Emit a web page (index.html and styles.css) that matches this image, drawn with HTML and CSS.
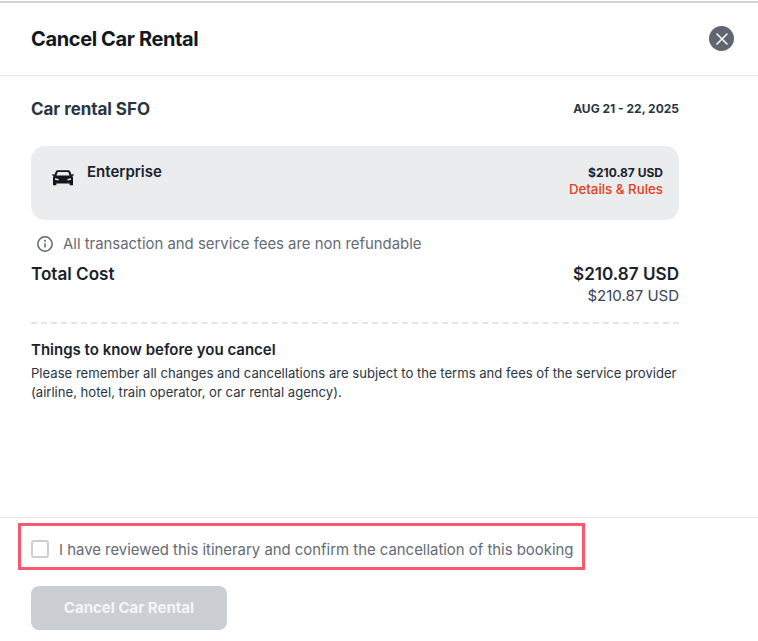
FILE: index.html
```html
<!DOCTYPE html>
<html lang="en">
<head>
<meta charset="utf-8">
<title>Cancel Car Rental</title>
<link rel="stylesheet" href="styles.css">
</head>
<body>
<div class="modal">
  <header class="head">
    <h1 class="title">Cancel Car Rental</h1>
    <button class="close" aria-label="Close">
      <svg width="12" height="12" viewBox="0 0 12 12"><path d="M1 1l10 10M11 1L1 11" stroke="#fff" stroke-width="1.500" stroke-linecap="round"/></svg>
    </button>
  </header>
  <main class="body">
    <div class="trip">
      <h2 class="trip-name">Car rental SFO</h2>
      <span class="trip-date">AUG 21 - 22, 2025</span>
    </div>
    <section class="card">
      <svg class="car" width="24" height="24" viewBox="0 0 24 24"><path fill="#12181f" d="M6.600 4.200h10.800c.8 0 1.400.4 1.700 1.100l1.500 3.400 1.900-.6.4 1.200-1.600.6c.4.4.7 1 .7 1.600v7.800h-3.300v-1.800H5.300v1.800H2v-7.800c0-.6.3-1.200.7-1.600L1.100 9.300l.4-1.200 1.900.6 1.500-3.400c.3-.7.9-1.100 1.700-1.100zm.2 1.800L5.400 9.500h13.200L17.200 6H6.800zM4 12.200v1.600l3.500.7v-1.400L4 12.200zm16 0l-3.500.9v1.400l3.500-.7v-1.600z"/></svg>
      <div class="vendor">Enterprise</div>
      <div class="card-right">
        <div class="card-price">$210.87 USD</div>
        <a class="rules">Details &amp; Rules</a>
      </div>
    </section>
    <p class="notice">
      <svg width="18" height="18" viewBox="0 0 18 18" fill="none"><circle cx="9" cy="9" r="7.200" stroke="#5f6670" stroke-width="1.500"/><path d="M9 8.200v4.300" stroke="#5f6670" stroke-width="1.500"/><circle cx="9" cy="5.700" r="1" fill="#5f6670"/></svg>
      <span>All transaction and service fees are non refundable</span>
    </p>
    <div class="total">
      <span class="total-label">Total Cost</span>
      <div class="total-values">
        <div class="total-main">$210.87 USD</div>
        <div class="total-sub">$210.87 USD</div>
      </div>
    </div>
    <h3 class="know-title">Things to know before you cancel</h3>
    <p class="know-text">Please remember all changes and cancellations are subject to the terms and fees of the service provider (airline, hotel, train operator, or car rental agency).</p>
  </main>
  <footer class="foot">
    <label class="confirm">
      <span class="check"></span>
      <span class="confirm-text">I have reviewed this itinerary and confirm the cancellation of this booking</span>
    </label>
    <button class="submit" disabled>Cancel Car Rental</button>
  </footer>
</div>
</body>
</html>
```
FILE: styles.css
```css
* { box-sizing: border-box; }
html, body { margin: 0; padding: 0; background: #fff; }
body { font-family: Inter, "Liberation Sans", sans-serif; color: #1a222d; overflow: hidden; }
.modal { width: 758px; height: 641px; display: flex; flex-direction: column; border-top: 2px solid #d2d3d5; margin-top: 1px; }
.head { height: 73px; flex: none; display: flex; align-items: center; justify-content: space-between; padding: 0 24px 1px 31px; border-bottom: 1px solid #e4e5e7; }
.title { margin: 0; font-size: 20px; line-height: 28px; font-weight: 700; letter-spacing: -0.37px; color: #12181f; }
.close { width: 25px; height: 25px; padding: 0; border: 0; border-radius: 50%; background: #5f6670; display: flex; align-items: center; justify-content: center; }
.body { flex: 1; padding: 0 79px 0 31px; border-bottom: 1px solid #e4e5e7; }
.trip { display: flex; justify-content: space-between; align-items: center; margin-top: 21px; height: 24px; }
.trip-name { margin: 0; font-size: 17px; font-weight: 700; letter-spacing: -0.05px; color: #2a3542; }
.trip-date { font-size: 12px; font-weight: 700; color: #2a3542; margin-bottom: 2px; }
.card { margin-top: 25px; height: 74px; border-radius: 14px; background: #ebecee; display: flex; padding: 15px 16px 0 20px; }
.car { margin-top: 5px; }
.vendor { margin-left: 12px; font-size: 15px; line-height: 22px; font-weight: 600; color: #1a222d; }
.card-right { margin-left: auto; text-align: right; padding-top: 3px; }
.card-price { font-size: 12px; line-height: 17px; font-weight: 700; color: #1a222d; }
.rules { display: block; font-size: 13.300px; line-height: 17px; font-weight: 500; color: #e0401c; }
.notice { margin: 14px 0 0 5px; display: flex; align-items: center; gap: 9px; font-size: 14.900px; line-height: 20px; color: #646b75; }
.total { display: flex; justify-content: space-between; margin-top: 8px; padding-bottom: 17px; border-bottom: 2px dashed #e2e4e8; }
.total-label { font-size: 17.100px; line-height: 24px; font-weight: 600; color: #1a222d; }
.total-values { text-align: right; }
.total-main { font-size: 17.100px; line-height: 24px; font-weight: 600; color: #1a222d; }
.total-sub { font-size: 15px; line-height: 18px; padding-top: 1px; color: #3b4450; }
.know-title { margin: 16px 0 0; font-size: 15px; line-height: 20px; font-weight: 600; color: #1a222d; }
.know-text { margin: 4px 0 0; font-size: 13.100px; line-height: 19px; color: #2a3542; }
.foot { flex: none; height: 124px; padding: 5px 0 0 18px; display: flex; flex-direction: column; align-items: flex-start; }
.confirm { width: 567px; height: 47px; border: 3px solid #f9596f; display: flex; align-items: center; gap: 10px; padding: 5px 0 0 10px; font-size: 14.900px; color: #646b75; }
.confirm-text { padding-top: 1px; }
.check { width: 18px; height: 18px; border: 2px solid #cbcfd3; border-radius: 3px; flex: none; }
.submit { margin: 16px 0 0 13px; width: 196px; height: 44px; padding: 0 0 2px; border: 0; border-radius: 8px; background: #cbcfd3; color: #f4f5f6; font-family: inherit; font-size: 15px; font-weight: 700; }
```
